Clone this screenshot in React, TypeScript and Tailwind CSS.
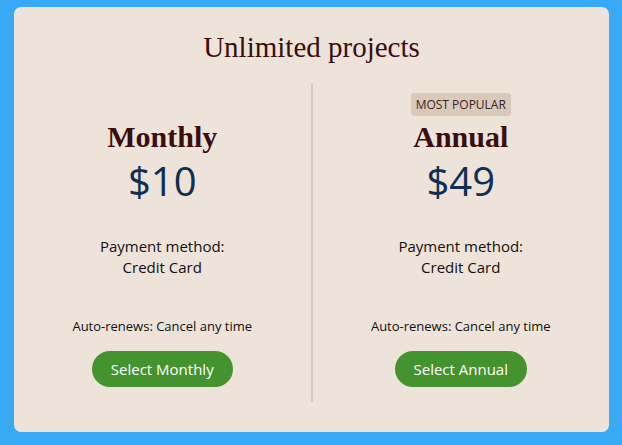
import React from 'react';

interface Plan {
  name: string;
  price: string;
  badge?: string;
  cta: string;
}

const plans: Plan[] = [
  { name: 'Monthly', price: '$10', cta: 'Select Monthly' },
  { name: 'Annual', price: '$49', badge: 'Most Popular', cta: 'Select Annual' },
];

const serif = { fontFamily: '"Liberation Serif", "DejaVu Serif", serif' };

function PlanColumn({ plan, withBorder }: { plan: Plan; withBorder: boolean }) {
  return (
    <div
      className={`flex-1 flex flex-col items-center pt-[10px] ${withBorder ? 'border-l-2 border-[#d6cbc0]' : ''}`}
    >
      <div className="h-[23px] flex items-center">
        {plan.badge && (
          <span className="px-[5px] h-[23px] flex items-center rounded-[3px] bg-[#d9c9bb] text-[12px] uppercase text-[#3b2424]">
            {plan.badge}
          </span>
        )}
      </div>
      <h2 className="mt-[4px] text-[30px] leading-[34px] font-bold text-[#3a0e0e]" style={serif}>
        {plan.name}
      </h2>
      <div className="mt-[3px] text-[40px] leading-[48px] text-[#0f2f55]">{plan.price}</div>
      <p className="mt-[31px] text-[15px] leading-[21px] text-[#111] text-center">
        Payment method:
        <br />
        Credit Card
      </p>
      <p className="mt-[39px] text-[13px] leading-[18px] text-[#111]">Auto-renews: Cancel any time</p>
      <button className="mt-[16px] h-[36px] px-[19px] rounded-full bg-[#45932f] text-white text-[15px] font-medium">
        {plan.cta}
      </button>
    </div>
  );
}

export default function App() {
  return (
    <div
      className="h-[445px] bg-[#38a9f5] pl-[14px] pr-[13px] pt-[7px] pb-[13px]"
      style={{ fontFamily: '"Open Sans", "Noto Sans", sans-serif' }}
    >
      <div className="h-full rounded-[7px] bg-[#ede3d9] flex flex-col">
        <h1 className="mt-[23px] text-center text-[29px] leading-[34px] text-[#3a0e0e]" style={serif}>
          Unlimited projects
        </h1>
        <div className="mt-[19px] mb-[30px] flex flex-1">
          {plans.map((plan, i) => (
            <PlanColumn key={plan.name} plan={plan} withBorder={i > 0} />
          ))}
        </div>
      </div>
    </div>
  );
}
